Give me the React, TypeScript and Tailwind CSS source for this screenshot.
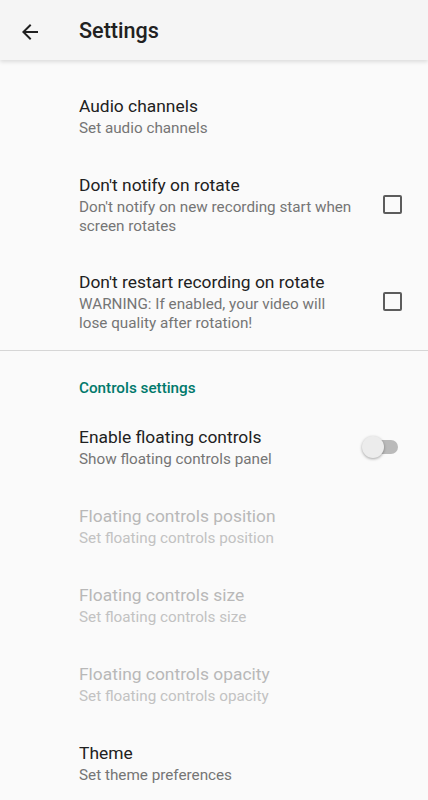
import React from 'react';

type Pref = {
  title: string;
  summary: string;
  widget?: 'checkbox' | 'switch';
  disabled?: boolean;
  tall?: boolean;
};

const Checkbox = () => (
  <div className="h-[19px] w-[19px] rounded-[2px] border-2 border-[#5c5c5c]" />
);

const Switch = () => (
  <div className="relative h-[24px] w-[36px]">
    <div className="absolute right-0 top-[5px] h-[14px] w-[34px] rounded-full bg-[#bababa]" />
    <div className="absolute left-0 top-[1px] h-[22px] w-[22px] rounded-full bg-[#ececec] shadow-[0_1px_3px_rgba(0,0,0,0.35)]" />
  </div>
);

const PrefRow = ({ title, summary, widget, disabled, tall }: Pref) => (
  <div
    className={
      'flex items-center pl-[79px] pr-[26px] ' +
      (tall ? 'pt-[18px] pb-[16px] min-h-[80px]' : 'py-[17px] min-h-[79px]')
    }
  >
    <div className="flex-1 pr-[26px]">
      <div className={'text-[17.4px] leading-[24px] ' + (disabled ? 'text-[#b8b8b8]' : 'text-[#212121]')}>
        {title}
      </div>
      <div className={'mt-[1px] text-[15.25px] leading-[19px] ' + (disabled ? 'text-[#c2c2c2]' : 'text-[#757575]')}>
        {summary}
      </div>
    </div>
    {widget === 'checkbox' && <Checkbox />}
    {widget === 'switch' && (
      <div className="mr-[4px]">
        <Switch />
      </div>
    )}
  </div>
);

export default function App() {
  return (
    <div className="min-h-[800px] w-[428px] overflow-hidden bg-[#fafafa] font-['Roboto',sans-serif]">
      <header className="relative z-10 flex h-[60px] items-center bg-[#f5f5f5] shadow-[0_2px_4px_rgba(0,0,0,0.12)]">
        <div className="flex w-[79px] pl-[18px] pt-[3px]">
          <svg width="24" height="24" viewBox="0 0 24 24" fill="#212121">
            <path d="M20 11H7.83l5.59-5.59L12 4l-8 8 8 8 1.41-1.41L7.83 13H20v-2z" />
          </svg>
        </div>
        <h1 className="pt-[1px] text-[21.6px] font-medium leading-none text-[#212121]">Settings</h1>
      </header>

      <div className="pt-[16px]">
        <PrefRow title="Audio channels" summary="Set audio channels" />
        <PrefRow
          title="Don't notify on rotate"
          summary="Don't notify on new recording start when screen rotates"
          widget="checkbox"
          tall
        />
        <PrefRow
          title="Don't restart recording on rotate"
          summary="WARNING: If enabled, your video will lose quality after rotation!"
          widget="checkbox"
          tall
        />
      </div>

      <div className="mt-[1px] h-px bg-[#d6d6d6]" />

      <div className="pl-[79px] pt-[28px] pb-[10px] text-[15.25px] font-medium leading-[18px] text-[#00796b]">
        Controls settings
      </div>

      <PrefRow title="Enable floating controls" summary="Show floating controls panel" widget="switch" />
      <PrefRow title="Floating controls position" summary="Set floating controls position" disabled />
      <PrefRow title="Floating controls size" summary="Set floating controls size" disabled />
      <PrefRow title="Floating controls opacity" summary="Set floating controls opacity" disabled />
      <PrefRow title="Theme" summary="Set theme preferences" />
    </div>
  );
}
